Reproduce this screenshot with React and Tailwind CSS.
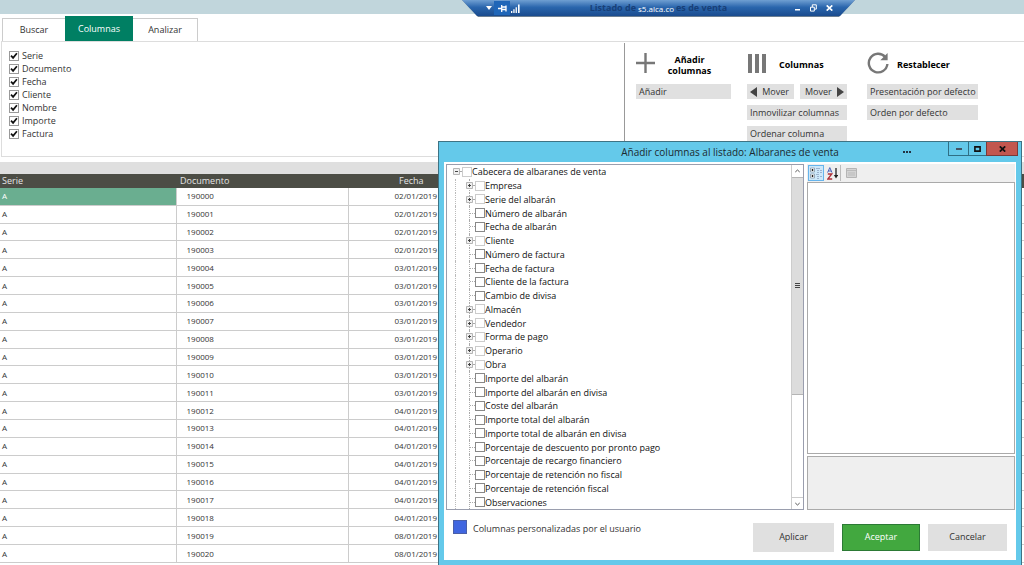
import React, { useState } from 'react'

const visibleColumns = ['Serie', 'Documento', 'Fecha', 'Cliente', 'Nombre', 'Importe', 'Factura']

const dates = [
  '02/01/2019', '02/01/2019', '02/01/2019', '02/01/2019', '03/01/2019', '03/01/2019', '03/01/2019',
  '03/01/2019', '03/01/2019', '03/01/2019', '03/01/2019', '03/01/2019', '04/01/2019', '04/01/2019',
  '04/01/2019', '04/01/2019', '04/01/2019', '04/01/2019', '04/01/2019', '08/01/2019', '08/01/2019',
]
const rows = dates.map((fecha, i) => ({ serie: 'A', documento: 190000 + i, fecha }))

const treeItems = [
  { name: 'Empresa', branch: true },
  { name: 'Serie del albarán', branch: true },
  { name: 'Número de albarán' },
  { name: 'Fecha de albarán' },
  { name: 'Cliente', branch: true },
  { name: 'Número de factura' },
  { name: 'Fecha de factura' },
  { name: 'Cliente de la factura' },
  { name: 'Cambio de divisa' },
  { name: 'Almacén', branch: true },
  { name: 'Vendedor', branch: true },
  { name: 'Forma de pago', branch: true },
  { name: 'Operario', branch: true },
  { name: 'Obra', branch: true },
  { name: 'Importe del albarán' },
  { name: 'Importe del albarán en divisa' },
  { name: 'Coste del albarán' },
  { name: 'Importe total del albarán' },
  { name: 'Importe total de albarán en divisa' },
  { name: 'Porcentaje de descuento por pronto pago' },
  { name: 'Porcentaje de recargo financiero' },
  { name: 'Porcentaje de retención no fiscal' },
  { name: 'Porcentaje de retención fiscal' },
  { name: 'Observaciones' },
]

// connection bar of the remote session, it covers part of the window title
const RemoteBar = () => (
  <div className="absolute top-0 left-[462px] w-[393px] h-[17px] bg-[#6c7f92] [clip-path:polygon(0_0,100%_0,377px_100%,16px_100%)]">
    <div className="h-4 flex items-center px-[22px] bg-linear-to-b from-[#6f9fd2] via-[#2a66ad] via-45% to-[#1a4b8e] text-white">
      <div className="flex-1 flex items-center">
        <button aria-label="Menú" className="w-[10px] h-3 flex items-center justify-center">
          <svg width="6" height="4" viewBox="0 0 6 4"><path d="M0 0h6L3 4z" fill="currentColor" /></svg>
        </button>
        <button aria-label="Anclar" className="w-4 h-[14px] flex items-center justify-center bg-[#1f66b8]">
          <svg width="9" height="7" viewBox="0 0 9 7" stroke="currentColor" fill="none"><path d="M0 3.5h4M3.7 0v7M4 2h4M4 4.5h4M8 .5v6" strokeWidth="1.3" /></svg>
        </button>
        <svg className="ml-px" width="9" height="9" viewBox="0 0 9 9" fill="currentColor"><path d="M0 7h1.3v2H0zM2.3 5.3h1.3V9H2.3zM4.6 3.3h1.3V9H4.6zM7 .5h1.6V9H7z" /></svg>
      </div>
      <h1 className="flex items-center text-[9px] leading-4 font-bold text-[#173f78]">
        <span>Listado de</span>
        <span className="px-[2px] text-[8px] leading-[15px] font-normal text-white">s5.alca.co</span>
        <span>es de venta</span>
      </h1>
      <div className="flex-1 flex items-center justify-end gap-2">
        <button aria-label="Minimizar" className="h-3 w-2 flex items-center justify-center pt-1">
          <svg width="5" height="2"><path d="M0 0h5v1.6H0z" fill="currentColor" /></svg>
        </button>
        <button aria-label="Restaurar" className="h-3 w-2 flex items-center justify-center">
          <svg width="7" height="8" viewBox="0 0 7 8" fill="none" stroke="currentColor"><path d="M.5 3.2h3.8v3.9H.5zM2.3 3V.8h4v4.3H4.4" /></svg>
        </button>
        <button aria-label="Cerrar" className="h-3 w-2 flex items-center justify-center">
          <svg width="7" height="6" viewBox="0 0 7 6" stroke="currentColor" strokeWidth="1.7"><path d="M.7.4l5.6 5.2M6.3.4L.7 5.6" /></svg>
        </button>
      </div>
    </div>
  </div>
)

const ColumnCheck = ({ name }) => {
  const [checked, setChecked] = useState(true)
  return (
    <label className="relative flex items-center gap-[3px] h-[13px] text-[9px] leading-[13px]">
      <input
        type="checkbox"
        checked={checked}
        onChange={() => setChecked(!checked)}
        className="peer appearance-none w-[10px] h-[10px] border border-[#999]"
      />
      <svg className="absolute left-[1px] top-[3px] hidden peer-checked:block pointer-events-none" width="8" height="8" viewBox="0 0 8 8" fill="none">
        <path d="M1 3.6l2.1 2.3L6.9 1.2" stroke="#111" strokeWidth="1.7" />
      </svg>
      {name}
    </label>
  )
}

const ActionButton = ({ className = '', children }) => (
  <button className={`h-[15px] px-[3px] bg-[#e0e0e0] text-left text-[9px] leading-[15px] whitespace-nowrap ${className}`}>
    {children}
  </button>
)

const Actions = () => (
  <div className="shrink-0 w-[400px] flex items-start mt-px pl-[11px] pt-2 border-l border-[#999]">
    <div className="w-[95px] flex flex-col">
      <div className="flex items-center h-6 mb-[9px]">
        <svg width="19" height="20" viewBox="0 0 19 20" stroke="#777" strokeWidth="2.4"><path d="M9.5 0v20M0 10h19" /></svg>
        <h2 className="flex-1 pr-[7px] pt-1 text-center text-[9px] leading-[11px] font-bold text-black">Añadir<br />columnas</h2>
      </div>
      <ActionButton>Añadir</ActionButton>
    </div>
    <div className="w-[100px] ml-4">
      <div className="flex items-center h-6 mb-[9px]">
        <svg width="19" height="19" viewBox="0 0 19 19" fill="#777"><path d="M1 0h4v19H1zM8 0h4v19H8zM15 0h4v19h-4z" /></svg>
        <h2 className="pl-[13px] pt-1 text-[9px] font-bold text-black">Columnas</h2>
      </div>
      <div className="flex flex-col gap-[6px]">
        <div className="flex justify-between">
          <ActionButton className="w-[47px] flex items-center justify-between">
            <svg width="7" height="10" viewBox="0 0 7 10"><path d="M7 0v10L0 5z" fill="#444" /></svg>
            <span className="pr-[2px]">Mover</span>
          </ActionButton>
          <ActionButton className="w-[47px] flex items-center justify-between">
            <span className="pl-[2px]">Mover</span>
            <svg width="7" height="10" viewBox="0 0 7 10"><path d="M0 0v10l7-5z" fill="#444" /></svg>
          </ActionButton>
        </div>
        <ActionButton>Inmovilizar columnas</ActionButton>
        <ActionButton>Ordenar columna</ActionButton>
      </div>
    </div>
    <div className="w-[111px] ml-5">
      <div className="flex items-center h-6 mb-[9px]">
        <svg width="22" height="22" viewBox="0 0 22 22" fill="none">
          <path d="M18.2 5A9.3 9.3 0 1 0 20.4 12" stroke="#777" strokeWidth="2.4" />
          <path d="M20.6 1v7.3h-7.3z" fill="#777" />
        </svg>
        <h2 className="pl-2 pt-1 text-[9px] font-bold text-black">Restablecer</h2>
      </div>
      <div className="flex flex-col gap-[6px]">
        <ActionButton>Presentación por defecto</ActionButton>
        <ActionButton>Orden por defecto</ActionButton>
      </div>
    </div>
  </div>
)

const DeliveryTable = () => (
  <table className="w-full h-[389px] table-fixed border-collapse text-[8px] leading-[12px]">
    <colgroup>
      <col className="w-[176px]" />
      <col className="w-[172px]" />
      <col className="w-[92px]" />
      <col />
    </colgroup>
    <thead>
      <tr className="h-[14px] bg-[#4c4d45] text-[#e4e4e4] text-[9px] text-left">
        <th className="font-normal pl-[2px]">Serie</th>
        <th className="font-normal pl-1">Documento</th>
        <th className="font-normal pl-[51px]">Fecha</th>
        <th />
      </tr>
    </thead>
    <tbody>
      {rows.map((row, i) => (
        <tr key={row.documento} className="border-b border-[#ccc]">
          <td className={i === 0 ? 'pl-[2px] border-r border-[#ccc] bg-[#6aae90] text-white' : 'pl-[2px] border-r border-[#ccc]'}>{row.serie}</td>
          <td className="pl-[10px] border-r border-[#ccc]">{row.documento}</td>
          <td className="pr-[3px] text-right">{row.fecha}</td>
          <td />
        </tr>
      ))}
    </tbody>
  </table>
)

const Toggle = ({ open }) => (
  <button aria-label={open ? 'Contraer' : 'Expandir'} className="relative w-[7px] h-[7px] shrink-0">
    <svg width="7" height="7" viewBox="0 0 7 7" className="block">
      <path d="M.5.5h6v6h-6z" fill="#f0f0f0" stroke="#b5b5b5" />
      <path d={open ? 'M2 3.5h3' : 'M2 3.5h3M3.5 2v3'} stroke="#444" />
    </svg>
  </button>
)

const TreeRow = ({ item, root }) => (
  <li className={root ? 'flex items-center pl-[6px]' : 'relative flex items-center ml-[8px] pl-[10px] border-l border-dotted border-[#bbb]'}>
    {!root && <span className="absolute left-[13px] top-0 h-full border-l border-dotted border-[#aaa]" />}
    {item.branch ? <Toggle open={root} /> : <span className="w-[7px] shrink-0" />}
    {item.branch
      ? <span className="w-[2px] border-t border-dotted border-[#aaa]" />
      : <span className="w-[5px] -ml-[3px] border-t border-dotted border-[#aaa]" />}
    <label className="flex items-center whitespace-nowrap">
      <input
        type="checkbox"
        className={item.branch
          ? 'appearance-none w-[10px] h-[10px] border border-[#ccc] bg-white checked:bg-[#4066e0]'
          : 'appearance-none w-[10px] h-[10px] border border-[#888] bg-white checked:bg-[#4066e0]'}
      />
      {item.name}
    </label>
  </li>
)

const ScrollBar = () => (
  <div className="w-3 shrink-0 flex flex-col border-l border-[#ccc]">
    <button aria-label="Subir" className="h-3 flex items-center justify-center">
      <svg width="5" height="4" viewBox="0 0 5 4" fill="none" stroke="#555"><path d="M.3 3l2.2-2 2.2 2" /></svg>
    </button>
    <div className="flex-1 flex flex-col">
      <div className="basis-[68%] flex items-center justify-center bg-[#dcdcdc] border-y border-[#b5b5b5]">
        <svg width="5" height="6" viewBox="0 0 5 6" stroke="#444"><path d="M0 .5h5M0 2.5h5M0 4.5h5" /></svg>
      </div>
    </div>
    <button aria-label="Bajar" className="h-3 flex items-center justify-center border-t border-[#ccc]">
      <svg width="5" height="4" viewBox="0 0 5 4" fill="none" stroke="#555"><path d="M.3 1l2.2 2 2.2-2" /></svg>
    </button>
  </div>
)

const PropertyPanel = () => (
  <div className="w-[208px] shrink-0 flex flex-col">
    <div className="h-[18px] flex items-center pl-px bg-[#efefef]">
      <button aria-label="Por categorías" className="w-4 h-4 flex items-center justify-center bg-[#cde8fa] border border-[#66b4ec]">
        <svg width="12" height="12" viewBox="0 0 12 12" fill="none">
          <path d="M.5 1h4v4h-4zM.5 7h4v4h-4z" fill="#fff" stroke="#9ab" />
          <path d="M1.5 3h2M2.5 2v2M1.5 9h2M2.5 8v2" stroke="#222" />
          <path d="M6 1.5h4M7 3.5h2M10 3.5h2M7 5.5h2M10 5.5h2M6 7.5h3M7 9.5h2M10 9.5h2M7 11.5h2" stroke="#9db2cf" />
        </svg>
      </button>
      <button aria-label="Alfabético" className="w-4 h-4 flex items-center justify-center">
        <svg width="11" height="13" viewBox="0 0 11 13" fill="none">
          <path d="M.6 5.6L2.8.6 5 5.6M1.4 4h2.8" stroke="#4a62b8" />
          <path d="M.8 7h4L.8 12h4.4" stroke="#b03038" strokeWidth="1.3" />
          <path d="M9 1v8" stroke="#222" strokeWidth="1.3" />
          <path d="M6.9 8h4.2L9 11.5z" fill="#222" />
        </svg>
      </button>
      <span className="h-4 border-l border-[#bbb]" />
      <button aria-label="Páginas de propiedades" className="w-5 h-4 flex items-center justify-center">
        <svg width="11" height="10" viewBox="0 0 11 10"><path d="M.5.5h10v9H.5z" fill="#d4d4d4" stroke="#b5b5b5" /><path d="M1 2.5h9M2 5h7M2 7h7" stroke="#bbb" /></svg>
      </button>
    </div>
    <div className="flex-1 mb-[2px] bg-white border border-[#aaa]" />
    <div className="h-[54px] bg-[#efefef] border border-[#aaa]" />
  </div>
)

const AddColumnsDialog = () => (
  <div role="dialog" aria-label="Añadir columnas" className="absolute top-[141px] bottom-0 left-[438px] right-[2px] flex flex-col bg-[#64c9ea] border-x border-t border-[#3e7384] px-[5px] pb-[5px]">
    <div className="h-5 shrink-0 relative flex items-center justify-center">
      <h1 className="text-[10px] leading-5 text-[#1c2a30]">Añadir columnas al listado: Albaranes de venta</h1>
      <div className="absolute top-0 right-[-2px] flex items-start">
        <svg width="8" height="2" viewBox="0 0 8 2" className="mt-[9px] mr-[37px]"><path d="M0 0h2v2H0zM3 0h2v2H3zM6 0h2v2H6z" fill="#234" /></svg>
        <button aria-label="Minimizar" className="w-5 h-[14px] flex items-center justify-center border-l border-b border-[#2f6f85]">
          <svg width="6" height="2"><path d="M0 0h6v2H0z" fill="#456" /></svg>
        </button>
        <button aria-label="Maximizar" className="w-[18px] h-[14px] flex items-center justify-center border-l border-b border-[#2f6f85]">
          <svg width="7" height="6" viewBox="0 0 7 6"><path d="M.9.9h5.2v4.2H.9z" fill="none" stroke="#111" strokeWidth="1.6" /></svg>
        </button>
        <button aria-label="Cerrar" className="w-8 h-[14px] flex items-center justify-center bg-[#c2574f] border border-t-0 border-[#7a3a38]">
          <svg width="7" height="6" viewBox="0 0 7 6" stroke="#111" strokeWidth="1.8"><path d="M.8.4l5.4 5.2M6.2.4L.8 5.6" /></svg>
        </button>
      </div>
    </div>
    <div className="flex-1 min-h-0 flex flex-col bg-white pt-[2px] pl-[2px] pr-px">
      <div className="flex-1 min-h-0 flex gap-[3px]">
        <div className="flex-1 flex border border-[#9a9eae] overflow-hidden">
          <ul className="flex-1 grid auto-rows-fr text-[9px] leading-[13px] text-[#111]">
            <TreeRow root item={{ name: 'Cabecera de albaranes de venta', branch: true }} />
            {treeItems.map((item) => <TreeRow key={item.name} item={item} />)}
          </ul>
          <ScrollBar />
        </div>
        <PropertyPanel />
      </div>
      <div className="h-[50px] shrink-0 flex items-center gap-2 pl-[7px] pr-1 pt-1 text-[9px]">
        <span className="w-[14px] h-[14px] mb-5 bg-[#4066e0] border border-[#4a5fa8]" />
        <span className="flex-1 mb-4 -ml-[2px]">Columnas personalizadas por el usuario</span>
        <div className="flex items-center gap-2 pr-1">
          <button className="w-[81px] h-[29px] bg-[#e0e0e0]">Aplicar</button>
          <button className="w-[78px] h-[27px] bg-[#42a83f] border border-[#2c7a35] text-white">Aceptar</button>
          <button className="w-[79px] h-[27px] bg-[#e0e0e0]">Cancelar</button>
        </div>
      </div>
    </div>
  </div>
)

const App = () => {
  return (
    <div className="relative h-screen overflow-hidden bg-white text-[#333] [font-family:'Open_Sans','Noto_Sans',sans-serif]">
      <header className="h-[14px] bg-[#c1d6dc]" />
      <RemoteBar />

      <nav className="flex items-end h-[27px] pl-[2px] text-[9px]">
        <button className="w-[63px] h-[23px] border-t border-l border-[#ccc]">Buscar</button>
        <button className="w-[68px] h-[25px] bg-[#007f63] text-white">Columnas</button>
        <button className="w-[65px] h-[23px] border-t border-r border-[#ccc]">Analizar</button>
      </nav>
      <section className="flex h-[116px] ml-px border-y border-l border-[#ddd]">
        <div className="flex-1 pl-[7px] pt-[7px]">
          {visibleColumns.map((name) => <ColumnCheck key={name} name={name} />)}
        </div>
        <Actions />
      </section>

      <div className="mt-[5px] h-3 bg-[#dfdfdf]" />
      <DeliveryTable />
      <AddColumnsDialog />
    </div>
  )
}

export default App
